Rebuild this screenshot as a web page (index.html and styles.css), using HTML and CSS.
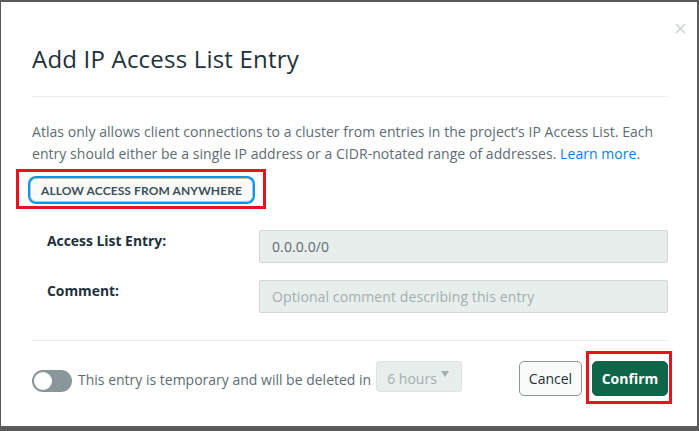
FILE: index.html
```html
<!DOCTYPE html>
<html>
<head>
<meta charset="utf-8">
<link rel="stylesheet" href="styles.css">
</head>
<body>
<div class="modal">
  <button class="close" aria-label="Close">
    <svg width="11" height="11" viewBox="0 0 11 11"><path d="M1 1L10 10M10 1L1 10" stroke="#c9cfd2" stroke-width="1.4" fill="none"/></svg>
  </button>
  <h1 class="title">Add IP Access List Entry</h1>
  <div class="divider"></div>
  <p class="desc">Atlas only allows client connections to a cluster from entries in the project’s IP Access List. Each entry should either be a single IP address or a CIDR-notated range of addresses. <a class="link" href="#">Learn more</a>.</p>
  <div class="highlight highlight-allow">
    <button class="allow-btn">ALLOW ACCESS FROM ANYWHERE</button>
  </div>
  <div class="form">
    <div class="row">
      <label class="label">Access List Entry:</label>
      <div class="input">0.0.0.0/0</div>
    </div>
    <div class="row">
      <label class="label">Comment:</label>
      <div class="input placeholder">Optional comment describing this entry</div>
    </div>
  </div>
  <div class="divider divider-bottom"></div>
  <div class="footer">
    <div class="temp">
      <span class="toggle"><span class="knob"></span></span>
      <span class="temp-text">This entry is temporary and will be deleted in</span>
      <span class="select">6 hours <span class="caret"></span></span>
    </div>
    <div class="actions">
      <button class="btn cancel">Cancel</button>
      <div class="highlight highlight-confirm">
        <button class="btn confirm">Confirm</button>
      </div>
    </div>
  </div>
</div>
</body>
</html>
```

FILE: styles.css
```css
* { box-sizing: border-box; }
html, body { margin: 0; height: 100%; }
body {
  background: #5b5b5b;
  padding: 2px 2px 5px 1px;
  font-family: "Open Sans", "Lato", sans-serif;
  color: #21313c;
}
.modal {
  position: relative;
  background: #fff;
  height: 424px;
  padding: 0 29px 0 31px;
}
.close {
  position: absolute;
  top: 21px;
  right: 11px;
  border: 0;
  background: none;
  padding: 0;
  width: 11px;
  height: 11px;
}
.close svg { display: block; }
.title {
  margin: 0;
  padding-top: 42px;
  font-size: 24px;
  font-weight: 400;
  line-height: 30px;
  letter-spacing: 0.2px;
  color: #21313c;
}
.divider {
  height: 1px;
  background: #e7eeec;
  margin-top: 22px;
}
.desc {
  margin: 24px 0 0;
  font-size: 14px;
  line-height: 22px;
  letter-spacing: 0.05px;
  color: #5d6c74;
}
.link { color: #0d7ee8; text-decoration: none; }
.highlight {
  border: 3px solid #e5141d;
}
.highlight-allow {
  display: inline-block;
  margin-left: -16px;
  margin-top: 4px;
  padding: 6px 10px 4px 11px;
}
.allow-btn {
  display: block;
  font-family: "Lato", sans-serif;
  font-size: 12px;
  font-weight: 700;
  color: #3d4f58;
  background: #f9fbfa;
  border: 1px solid #b8c4c2;
  border-radius: 6px;
  width: 223px;
  height: 24px;
  padding: 0;
  box-shadow: 0 0 0 2px #0498ec;
  letter-spacing: 0.1px;
}
.form {
  margin-top: 21px;
  display: flex;
  flex-direction: column;
  gap: 17px;
}
.row {
  display: flex;
  align-items: flex-start;
}
.label {
  width: 227px;
  padding-left: 15px;
  padding-top: 1px;
  font-size: 13.9px;
  font-weight: 700;
  color: #21313c;
}
.input {
  flex: 1;
  height: 33px;
  background: #e7eeec;
  border: 1px solid #cfd8d6;
  border-radius: 2px;
  padding: 0 12px;
  font-size: 14px;
  letter-spacing: 0.1px;
  line-height: 31px;
  color: #5d6c74;
}
.input.placeholder { color: #a3aeb0; }
.divider-bottom { margin-top: 27px; }
.footer {
  display: flex;
  justify-content: space-between;
  align-items: flex-start;
  margin-top: 10px;
  margin-right: -4px;
}
.temp {
  display: flex;
  align-items: flex-start;
  padding-top: 10px;
  font-size: 14px;
  color: #5d6c74;
}
.toggle {
  position: relative;
  flex: none;
  width: 40px;
  height: 22px;
  margin-top: 9px;
  border-radius: 11px;
  background: #89979b;
  margin-right: 6px;
}
.knob {
  position: absolute;
  left: 2px;
  top: 2px;
  width: 18px;
  height: 18px;
  border-radius: 50%;
  background: #fff;
}
.temp-text {
  line-height: 20px;
  margin-top: 9px;
}
.select {
  position: relative;
  flex: none;
  margin-left: 5px;
  width: 86px;
  height: 31px;
  background: #e7eeec;
  border: 1px solid #dde4e2;
  border-radius: 3px;
  padding-left: 10px;
  line-height: 33px;
  color: #a3aeb0;
  font-size: 14px;
}
.caret {
  position: absolute;
  right: 12px;
  top: 9px;
  width: 0;
  height: 0;
  border-left: 4px solid transparent;
  border-right: 4px solid transparent;
  border-top: 6px solid #a3aeb0;
}
.actions {
  display: flex;
  align-items: flex-start;
  gap: 4px;
}
.btn {
  font-family: inherit;
  font-size: 14px;
  height: 35px;
  border-radius: 5px;
  padding: 0;
}
.cancel {
  width: 63px;
  background: #f9fbfa;
  border: 1px solid #89979b;
  color: #21313c;
  margin-top: 10px;
}
.highlight-confirm {
  padding: 7px 1px 5px 3px;
}
.confirm {
  display: block;
  background: #0e6548;
  border: 1px solid #0e6548;
  color: #fff;
  font-weight: 700;
  width: 76px;
}
```
